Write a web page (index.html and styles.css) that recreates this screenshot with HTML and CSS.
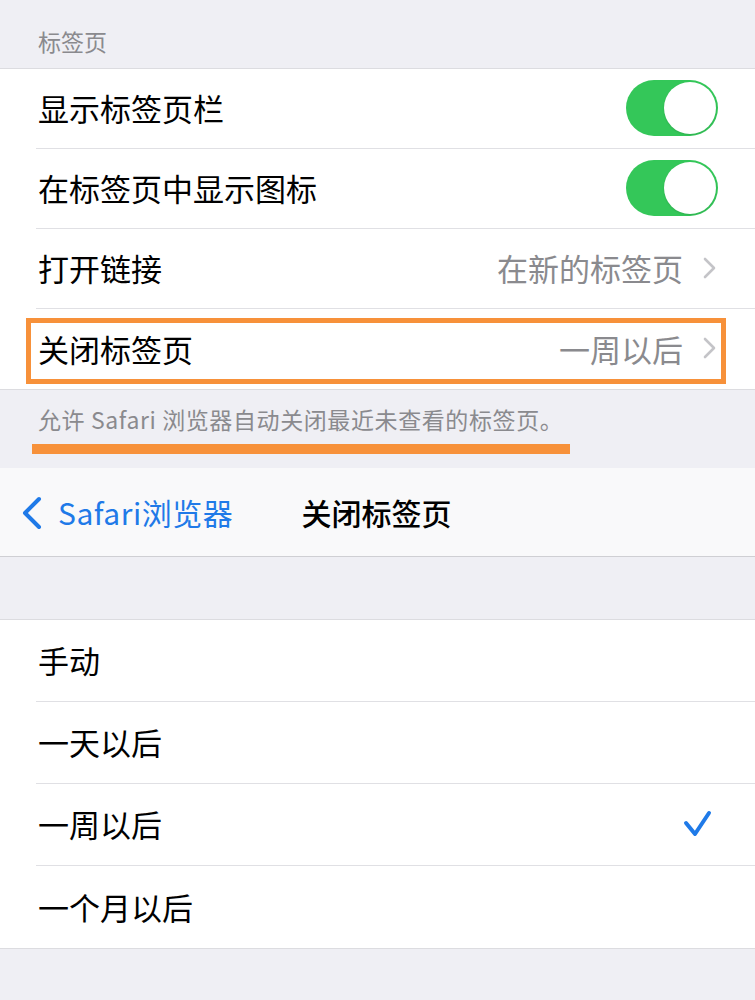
FILE: index.html
```html
<!DOCTYPE html>
<html lang="zh-CN">
<head>
    <meta charset="UTF-8">
    <meta name="viewport" content="width=device-width, initial-scale=1.0">
    <title>关闭标签页</title>
    <link rel="stylesheet" href="styles.css">
</head>
<body>
    <div class="section-title">标签页</div>
    <div class="group">
        <div class="row">
            <span class="label">显示标签页栏</span>
            <span class="switch on"><span class="knob"></span></span>
        </div>
        <div class="row">
            <span class="label">在标签页中显示图标</span>
            <span class="switch on"><span class="knob"></span></span>
        </div>
        <div class="row link">
            <span class="label">打开链接</span>
            <span class="value">在新的标签页
                <svg class="chevron" width="14" height="22" viewBox="0 0 14 22"><polyline points="2,2 11,11 2,20" fill="none" stroke="#c4c4c8" stroke-width="2.6" stroke-linecap="round" stroke-linejoin="round"/></svg>
            </span>
        </div>
        <div class="row link marked">
            <span class="label">关闭标签页</span>
            <span class="value">一周以后
                <svg class="chevron" width="14" height="22" viewBox="0 0 14 22"><polyline points="2,2 11,11 2,20" fill="none" stroke="#c4c4c8" stroke-width="2.6" stroke-linecap="round" stroke-linejoin="round"/></svg>
            </span>
            <span class="highlight-box"></span>
        </div>
    </div>
    <div class="section-note">
        允许 Safari 浏览器自动关闭最近未查看的标签页。
        <span class="highlight-line"></span>
    </div>

    <div class="navbar">
        <a class="back">
            <svg width="24" height="34" viewBox="0 0 24 34"><polyline points="19,3 5,17 19,31" fill="none" stroke="#1f7ae8" stroke-width="4" stroke-linecap="round" stroke-linejoin="round"/></svg>
            <span>Safari浏览器</span>
        </a>
        <div class="nav-title">关闭标签页</div>
        <div></div>
    </div>

    <div class="spacer"></div>

    <div class="group options">
        <div class="row"><span class="label">手动</span></div>
        <div class="row"><span class="label">一天以后</span></div>
        <div class="row">
            <span class="label">一周以后</span>
            <svg class="check" width="30" height="28" viewBox="0 0 30 28"><polyline points="3,13 12,24 26,3" fill="none" stroke="#1f7ae8" stroke-width="4" stroke-linecap="round" stroke-linejoin="round"/></svg>
        </div>
        <div class="row"><span class="label">一个月以后</span></div>
    </div>
</body>
</html>
```

FILE: styles.css
```css
body {
    margin: 0;
    width: 755px;
    min-height: 1000px;
    background: #efeff4;
    font-family: "Noto Sans CJK SC", "Noto Sans", sans-serif;
    color: #000;
}

.section-title {
    height: 68px;
    box-sizing: border-box;
    padding: 26px 0 0 38px;
    font-size: 23px;
    line-height: 30px;
    color: #8a8a8e;
}

.group {
    background: #fff;
    border-top: 1px solid #dcdce0;
    border-bottom: 1px solid #dcdce0;
}

.row {
    position: relative;
    display: flex;
    align-items: center;
    justify-content: space-between;
    height: 79px;
    margin-left: 36px;
    padding: 0 37px 2px 2px;
    box-sizing: border-box;
    height: 80px;
    border-bottom: 1px solid #e0e0e4;
    font-size: 31px;
}

.row:last-child {
    border-bottom: none;
}

.row.link {
    padding-right: 38px;
}

.value {
    display: flex;
    align-items: center;
    gap: 20px;
    color: #8a8a8e;
}

.switch {
    position: relative;
    width: 92px;
    height: 56px;
    border-radius: 28px;
    background: #34c759;
}

.switch .knob {
    position: absolute;
    top: 2px;
    right: 2px;
    width: 52px;
    height: 52px;
    border-radius: 50%;
    background: #fff;
    box-shadow: 0 1px 2px rgba(0, 0, 0, 0.12);
}

.highlight-box {
    position: absolute;
    left: -10px;
    top: 9px;
    width: 700px;
    height: 66px;
    box-sizing: border-box;
    border: 5px solid #f7913a;
    pointer-events: none;
}

.section-note {
    position: relative;
    height: 78px;
    box-sizing: border-box;
    padding: 14px 0 0 38px;
    font-size: 23px;
    line-height: 30px;
    letter-spacing: 0.6px;
    color: #8a8a8e;
}

.highlight-line {
    position: absolute;
    left: 32px;
    top: 54px;
    width: 538px;
    height: 10px;
    background: #f7913a;
}

.navbar {
    display: grid;
    grid-template-columns: 1fr auto 1fr;
    align-items: center;
    height: 88px;
    background: #f9f9fa;
    border-bottom: 1px solid #cfcfd3;
}

.back {
    display: flex;
    align-items: center;
    gap: 14px;
    padding-left: 20px;
    color: #1f7ae8;
    font-size: 30px;
    letter-spacing: 0.5px;
}

.back svg {
    margin-top: 2px;
}

.nav-title {
    font-size: 30px;
    font-weight: 500;
    margin-left: -2px;
}

.spacer {
    height: 62px;
}

.options .row {
    height: 82px;
}

.check {
    margin-right: 5px;
}
```
